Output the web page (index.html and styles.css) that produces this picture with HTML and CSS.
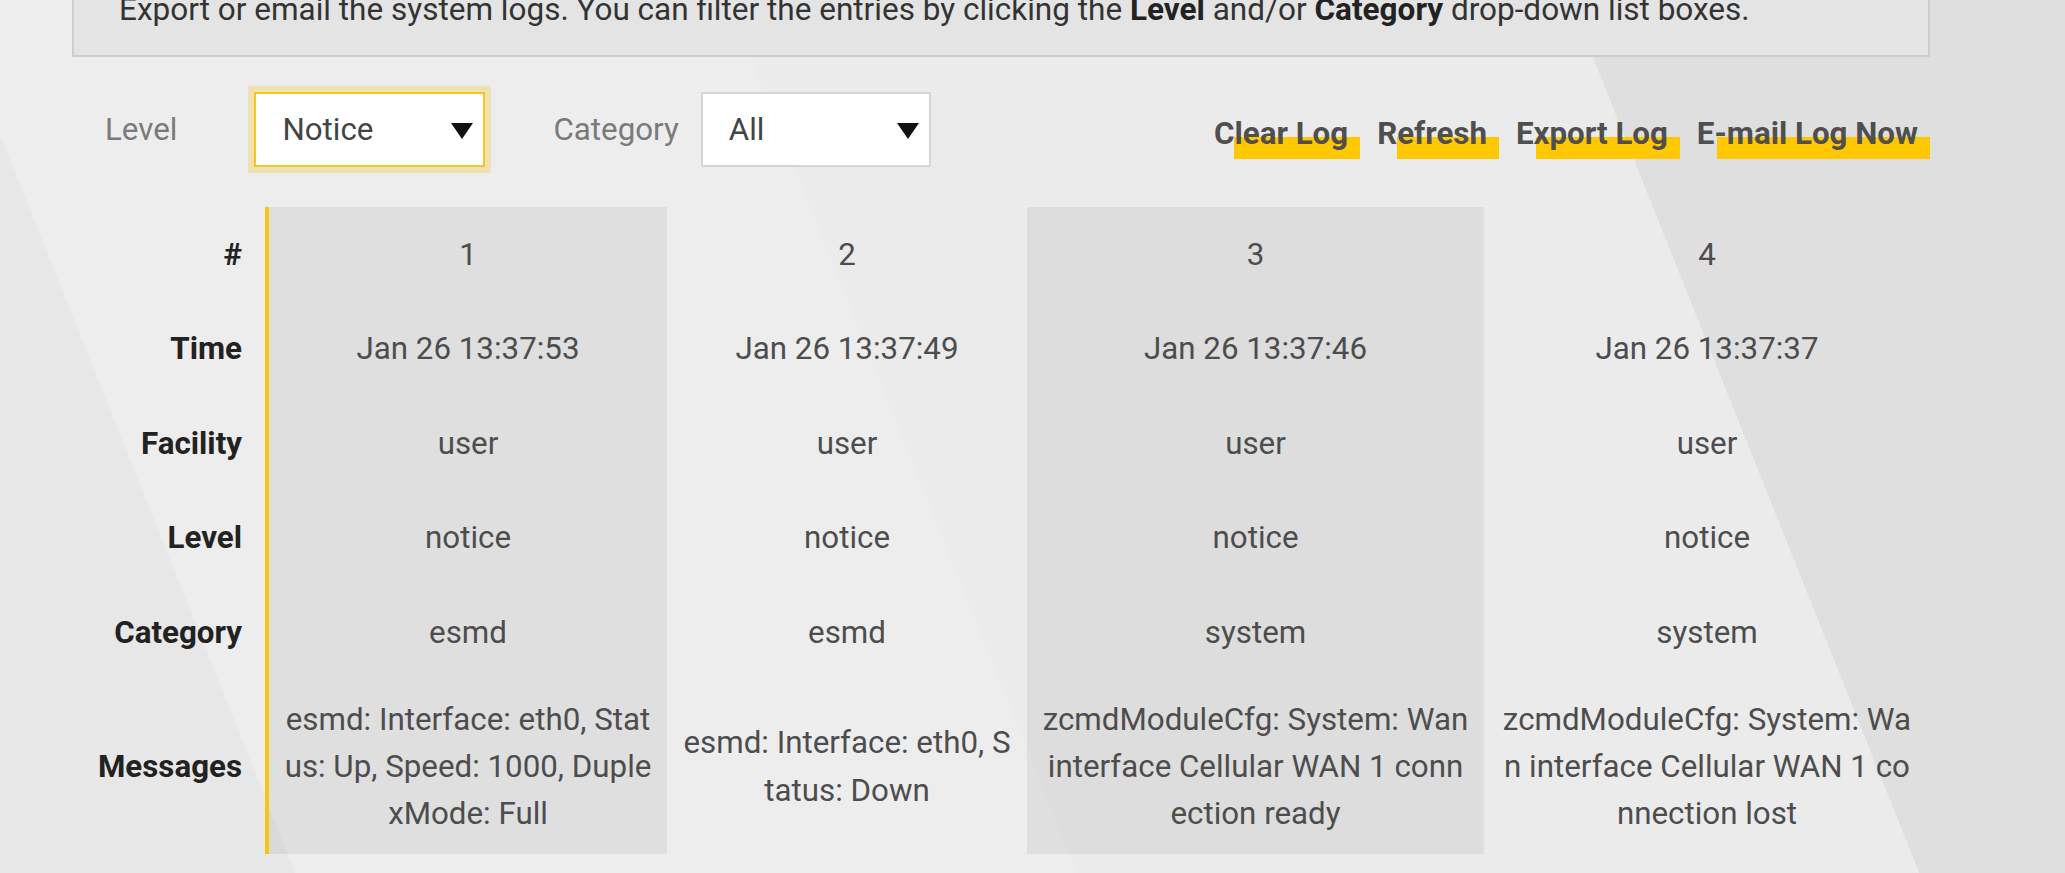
FILE: index.html
```html
<!DOCTYPE html>
<html lang="en">
<head>
<meta charset="utf-8">
<title>System Log</title>
<link rel="stylesheet" href="styles.css">
</head>
<body>
<div class="page">
  <div class="info">
    <p>Export or email the system logs. You can filter the entries by clicking the <b>Level</b> and/or <b>Category</b> drop-down list boxes.</p>
  </div>

  <div class="controls">
    <span class="ctl-label">Level</span>
    <div class="select select-focus">
      <span class="select-value">Notice</span>
      <svg class="caret" width="22" height="16" viewBox="0 0 22 16"><polygon points="0,0 22,0 11,16" fill="#111"/></svg>
    </div>
    <span class="ctl-label ctl-label-cat">Category</span>
    <div class="select">
      <span class="select-value">All</span>
      <svg class="caret" width="22" height="16" viewBox="0 0 22 16"><polygon points="0,0 22,0 11,16" fill="#111"/></svg>
    </div>
    <div class="actions">
      <a class="action">Clear Log</a>
      <a class="action">Refresh</a>
      <a class="action">Export Log</a>
      <a class="action">E-mail Log Now</a>
    </div>
  </div>

  <table class="log">
    <colgroup>
      <col class="c-head">
      <col class="c1">
      <col class="c2">
      <col class="c3">
      <col class="c4">
    </colgroup>
    <tbody>
      <tr class="row">
        <th>#</th>
        <td class="shade">1</td>
        <td>2</td>
        <td class="shade">3</td>
        <td>4</td>
      </tr>
      <tr class="row">
        <th>Time</th>
        <td class="shade">Jan 26 13:37:53</td>
        <td>Jan 26 13:37:49</td>
        <td class="shade">Jan 26 13:37:46</td>
        <td>Jan 26 13:37:37</td>
      </tr>
      <tr class="row">
        <th>Facility</th>
        <td class="shade">user</td>
        <td>user</td>
        <td class="shade">user</td>
        <td>user</td>
      </tr>
      <tr class="row">
        <th>Level</th>
        <td class="shade">notice</td>
        <td>notice</td>
        <td class="shade">notice</td>
        <td>notice</td>
      </tr>
      <tr class="row">
        <th>Category</th>
        <td class="shade">esmd</td>
        <td>esmd</td>
        <td class="shade">system</td>
        <td>system</td>
      </tr>
      <tr class="row row-msg">
        <th>Messages</th>
        <td class="shade">esmd: Interface: eth0, Status: Up, Speed: 1000, DuplexMode: Full</td>
        <td>esmd: Interface: eth0, Status: Down</td>
        <td class="shade">zcmdModuleCfg: System: Wan interface Cellular WAN 1 connection ready</td>
        <td>zcmdModuleCfg: System: Wan interface Cellular WAN 1 connection lost</td>
      </tr>
    </tbody>
  </table>
</div>
</body>
</html>
```

FILE: styles.css
```css
html, body {
  margin: 0;
  padding: 0;
}

body {
  width: 2065px;
  height: 873px;
  overflow: hidden;
  font-family: Roboto, "Noto Sans", "Liberation Sans", sans-serif;
  color: #4a4a4a;
  background-color: #ebebeb;
  background-image:
    linear-gradient(68.2deg, rgba(0,0,0,0.015) 0 274px, rgba(255,255,255,0.12) 274px 1000px, rgba(0,0,0,0) 1000px 1782px, rgba(0,0,0,0.05) 1782px);
}

.page {
  margin-left: 72px;
  width: 1858px;
}

/* info box */
.info {
  box-sizing: border-box;
  width: 1858px;
  margin-top: -20px;
  padding: 8px 45px 25px;
  background: #e4e4e4;
  border: 2px solid #cdcdcd;
}

.info p {
  margin: 0;
  font-size: 31.5px;
  line-height: 40px;
  color: #333;
}

.info b {
  color: #222;
}

/* controls */
.controls {
  display: flex;
  align-items: center;
  height: 75px;
  margin-top: 35px;
  padding-left: 33px;
}

.ctl-label {
  font-size: 31.3px;
  color: #7a7a7a;
  margin-right: 77px;
}

.ctl-label-cat {
  margin-left: 68px;
  margin-right: 22px;
}

.select {
  box-sizing: border-box;
  position: relative;
  display: flex;
  align-items: center;
  width: 230px;
  height: 75px;
  padding: 0 10px 0 26px;
  background: #fff;
  border: 2px solid #d6d6d6;
}

.select-focus {
  width: 231px;
  border-color: #f3c623;
  box-shadow: 0 0 0 6px rgba(245, 200, 40, 0.3);
}

.select-value {
  flex: 1;
  font-size: 31.3px;
  color: #444;
}

.caret {
  display: block;
  margin-top: 2px;
}

.actions {
  position: relative;
  z-index: 0;
  display: flex;
  gap: 29px;
  margin-left: auto;
  margin-right: 12px;
  padding-top: 8px;
}

.action {
  position: relative;
  font-size: 31.3px;
  line-height: 36px;
  font-weight: 700;
  color: #4f4f4f;
  white-space: nowrap;
}

.action::before {
  content: "";
  position: absolute;
  left: 20px;
  right: -12px;
  top: 21px;
  height: 22px;
  background: #ffc800;
  z-index: -1;
}

/* log table */
.log {
  margin-top: 40px;
  width: 1858px;
  table-layout: fixed;
  border-collapse: collapse;
  border-spacing: 0;
}

.c-head { width: 195px; }
.c1 { width: 400px; }
.c2 { width: 360px; }
.c3 { width: 457px; }
.c4 { width: 446px; }

.log th,
.log td {
  height: 94.5px;
  padding: 0 14px;
  font-size: 31.3px;
  line-height: 47.4px;
  vertical-align: middle;
}

.log th {
  box-sizing: border-box;
  padding: 0 23px 0 0;
  text-align: right;
  font-weight: 700;
  color: #222;
  border-right: 4px solid #f5c518;
}

.log td {
  text-align: center;
  color: #4d4d4d;
  word-break: break-all;
}

.log td.shade {
  background: rgba(0, 0, 0, 0.06);
}

.row-msg th,
.row-msg td {
  height: 174.5px;
}
```
